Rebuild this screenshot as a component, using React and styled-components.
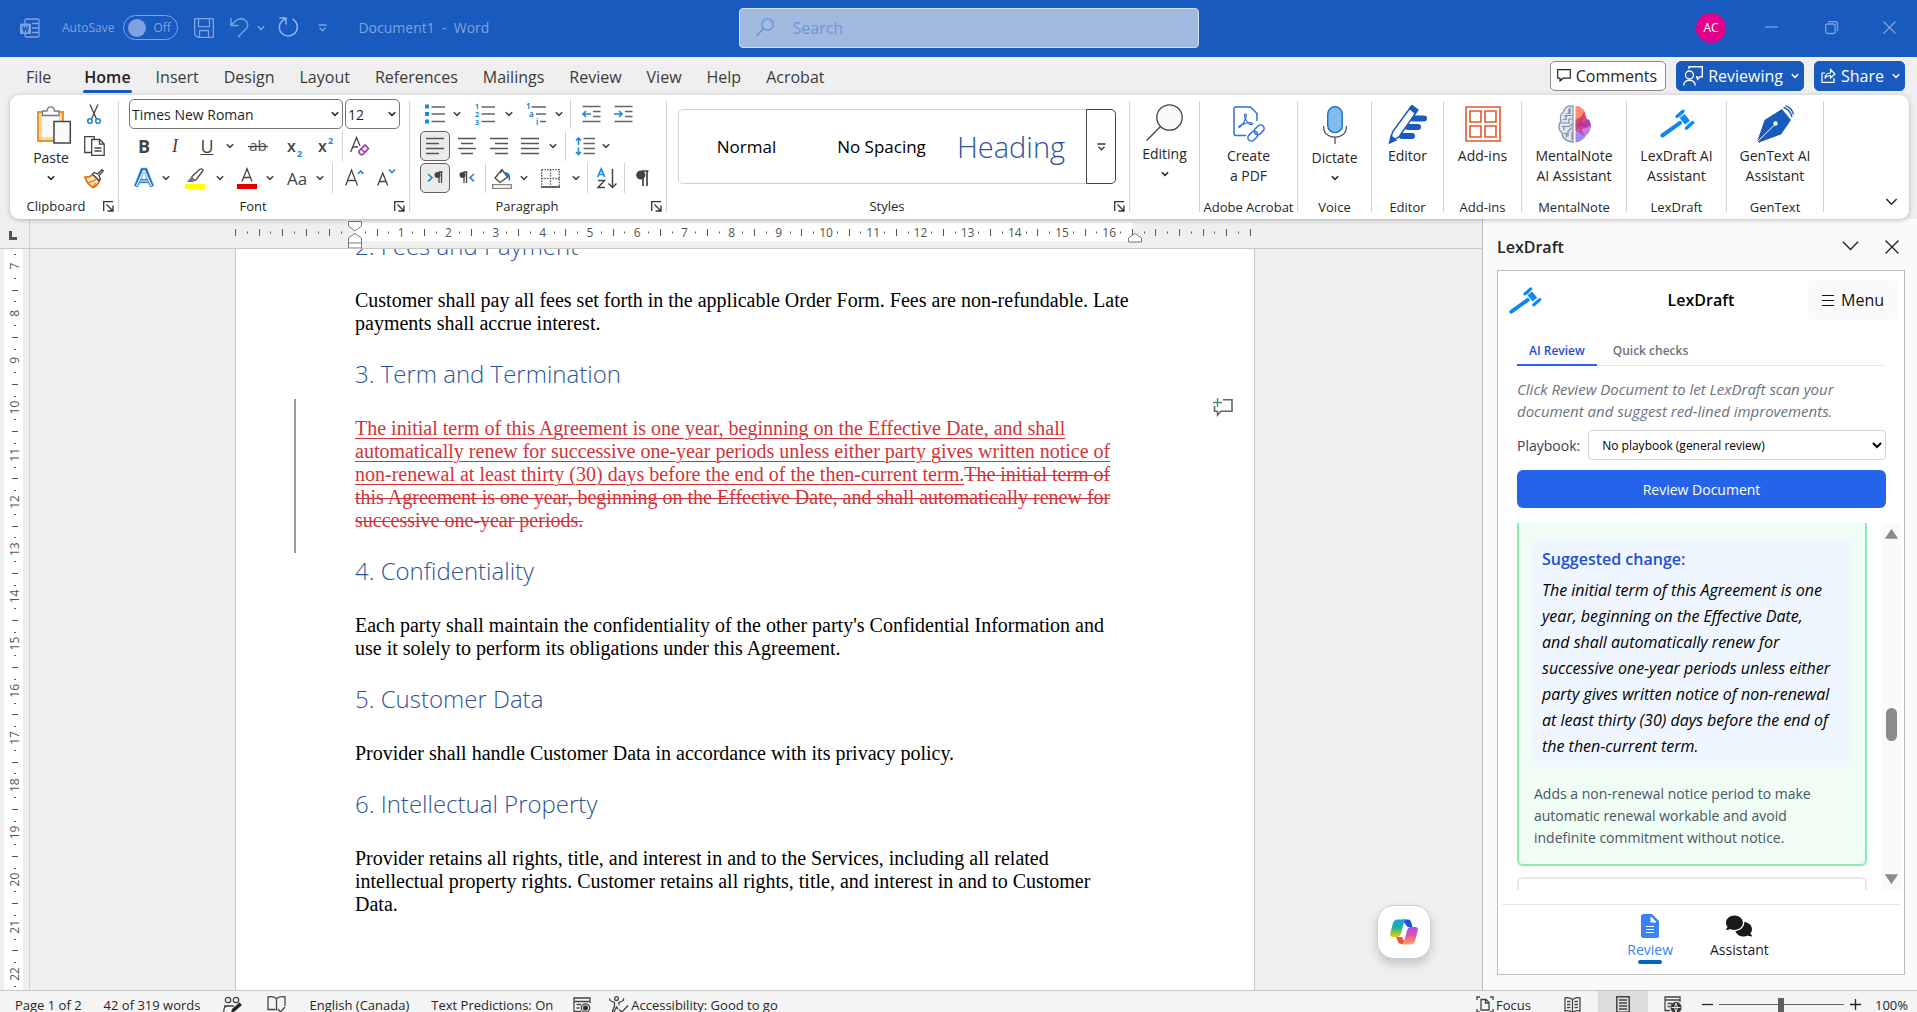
import React from "react";
import styled, { createGlobalStyle, css } from "styled-components";
import { FaComments } from "react-icons/fa6";

const GlobalStyle = createGlobalStyle`
  * {
    box-sizing: border-box;
  }
  body {
    margin: 0;
    overflow: hidden;
    font-family: "Open Sans", "Noto Sans", sans-serif;
    color: #262626;
  }
  button, input, select {
    font-family: inherit;
    color: inherit;
  }
  button {
    display: flex;
    align-items: center;
    justify-content: center;
    padding: 0;
    border: none;
    background: none;
  }
  svg {
    display: block;
    flex: none;
    overflow: visible;
  }
  h1, h2, p {
    margin: 0;
  }
`;

const Shell = styled.div`
  display: flex;
  flex-direction: column;
  height: 100vh;
  overflow: hidden;
  background: #efefef;
`;

/* ---------- title bar ---------- */

const TitleBar = styled.header`
  display: grid;
  grid-template-columns: 1fr 460px 1fr;
  align-items: center;
  flex: none;
  height: 57px;
  padding: 0 0 2px 20px;
  background: #185abd;
  color: #7ea3e0;
`;

const QuickAccess = styled.div`
  display: flex;
  align-items: center;
  gap: 10px;
`;

const AutoSave = styled.label`
  display: flex;
  align-items: center;
  gap: 9px;
  margin: 0 6px 0 12px;
  font-size: 12px;
`;

const Toggle = styled.span`
  display: flex;
  align-items: center;
  gap: 7px;
  width: 55px;
  height: 25px;
  padding-left: 4px;
  border: 1px solid #7ea3e0;
  border-radius: 13px;
  input {
    appearance: none;
    width: 18px;
    height: 18px;
    margin: 0;
    border-radius: 50%;
    background: #7ea3e0;
  }
`;

const SplitButton = styled.div`
  display: flex;
  align-items: center;
`;

const BarButton = styled.button`
  width: ${(p) => p.$w}px;
  height: 30px;
`;

const DocTitle = styled.h1`
  margin-left: 12px;
  font-size: 14px;
  font-weight: 400;
  white-space: pre;
`;

const SearchBox = styled.label`
  display: flex;
  align-items: center;
  gap: 17px;
  height: 40px;
  padding-left: 16px;
  border: 1px solid #d3dff3;
  border-radius: 4px;
  background: #a2b9e0;
  color: #6290d8;
  input {
    flex: 1;
    min-width: 0;
    border: none;
    outline: none;
    background: none;
    font-size: 16px;
  }
  input::placeholder {
    color: #6c96dc;
  }
`;

const WindowControls = styled.div`
  display: flex;
  align-items: center;
  justify-content: flex-end;
`;

const Avatar = styled.button`
  width: 30px;
  height: 30px;
  margin-right: 15px;
  border-radius: 50%;
  background: #e3008c;
  color: #fff;
  font-size: 12px;
`;

/* ---------- ribbon ---------- */

const TabRow = styled.nav`
  display: flex;
  align-items: center;
  gap: 1px;
  flex: none;
  height: 38px;
  padding: 1px 12px 0 14px;
`;

const RibbonTab = styled.button`
  position: relative;
  height: 36px;
  padding: 0 12px;
  font-size: 16px;
  color: #3b3b3b;
  ${(p) =>
    p.$active &&
    css`
      margin-left: 8px;
      font-weight: 600;
      color: #1f1f1f;
      &::after {
        content: "";
        position: absolute;
        right: 11px;
        bottom: 2px;
        left: 11px;
        height: 3px;
        border-radius: 2px;
        background: #185abd;
      }
    `}
`;

const TabActions = styled.div`
  display: flex;
  gap: 10px;
  margin: 0 0 2px auto;
`;

const ActionButton = styled.button`
  gap: 5px;
  height: 30px;
  padding: 0 ${(p) => (p.$filled ? 4 : 8)}px 0 6px;
  border: 1px solid ${(p) => (p.$filled ? "#185abd" : "#8a8a8a")};
  border-radius: 5px;
  background: ${(p) => (p.$filled ? "#185abd" : "#fff")};
  color: ${(p) => (p.$filled ? "#fff" : "#262626")};
  font-size: 16px;
`;

const ArrowPad = styled.span`
  padding-left: 3px;
`;

const Ribbon = styled.section`
  position: relative;
  z-index: 2;
  display: flex;
  flex: none;
  height: 124px;
  margin: 0 8px 0 10px;
  padding: 6px 0 0;
  border-radius: 9px;
  background: #fff;
  box-shadow: 0 1px 5px rgba(0, 0, 0, 0.25);
`;

const Group = styled.div`
  display: flex;
  flex-direction: column;
  flex: none;
  width: ${(p) => p.$w}px;
  height: 111px;
  border-right: 1px solid #d1d1d1;
`;

const GroupBody = styled.div`
  flex: 1;
  min-height: 0;
  padding-left: ${(p) => p.$pad || 0}px;
`;

const GroupFooter = styled.div`
  display: grid;
  grid-template-columns: 1fr 18px;
  align-items: center;
  justify-items: center;
  height: 18px;
  margin-bottom: -3px;
  padding: 0 4px 0 ${(p) => p.$pad || 0}px;
  font-size: 13px;
  line-height: 18px;
  white-space: nowrap;
  button {
    justify-self: end;
  }
`;

const ToolRow = styled.div`
  display: flex;
  align-items: center;
  height: 32px;
`;

const Tools = styled.div`
  margin-top: -3px;
`;

const Tool = styled.button`
  flex: none;
  width: ${(p) => p.$w || 32}px;
  height: 30px;
  margin-left: ${(p) => p.$gap || 0}px;
  font-size: 18px;
  color: #444;
  ${(p) =>
    p.$on &&
    css`
      border: 1px solid #616161;
      border-radius: 5px;
      background: #ebebeb;
    `}
`;

const ToolDivider = styled.span`
  width: 1px;
  height: 30px;
  margin: 0 ${(p) => p.$gap || 1}px;
  background: #d1d1d1;
`;

const Combo = styled.div`
  display: flex;
  align-items: center;
  width: ${(p) => p.$w}px;
  height: 30px;
  margin-right: 2px;
  padding: 0 3px 0 1px;
  border: 1px solid #767676;
  border-radius: 5px;
  input {
    flex: 1;
    min-width: 0;
    padding: 0 0 0 1px;
    border: none;
    outline: none;
    background: none;
    font-size: 14px;
    color: #1f1f1f;
  }
`;

const ClipboardTools = styled.div`
  display: flex;
`;

const BigButton = styled.button`
  flex-direction: column;
  justify-content: flex-start;
  width: 100%;
  font-size: 14px;
  line-height: 20px;
  white-space: pre-line;
`;

const PasteButton = styled(BigButton)`
  width: 40px;
  margin: 0 5px 0 21px;
`;

const PastePad = styled.span`
  padding: 5px 0 4px 6px;
`;

const ChevronPad = styled.span`
  padding-top: 7px;
`;

const IconBox = styled.span`
  display: flex;
  align-items: center;
  justify-content: center;
  height: ${(p) => p.$h || 45}px;
`;

const SerifI = styled.i`
  font-family: "Liberation Serif", serif;
`;

const CaseText = styled.span`
  font-size: 17px;
`;

const WideLabel = styled.div`
  height: 18px;
  margin-bottom: -4px;
  font-size: 13px;
  line-height: 18px;
  text-align: center;
  white-space: nowrap;
`;

const Gallery = styled.div`
  display: flex;
  height: 75px;
  width: 438px;
  margin-top: 8px;
  border: 1px solid #d1d1d1;
  border-radius: 5px;
`;

const StyleItem = styled.button`
  width: 135px;
  font-size: 17px;
  color: #000;
  white-space: nowrap;
`;

const StyleHeading = styled(StyleItem)`
  width: 124px;
  font-size: 29px;
  font-weight: 300;
  color: #2f5496;
`;

const GalleryMore = styled.button`
  width: 30px;
  margin: -1px -1px -1px auto;
  border: 1px solid #444;
  border-radius: 0 5px 5px 0;
`;

const RibbonEnd = styled.div`
  display: flex;
  flex: 1;
  align-items: flex-end;
  justify-content: flex-end;
  padding: 0 11px 12px 0;
`;

/* ---------- document ---------- */

const Workspace = styled.main`
  display: flex;
  flex: 1;
  min-height: 0;
`;

const Editor = styled.section`
  position: relative;
  display: grid;
  grid-template-columns: 30px 1fr;
  grid-template-rows: 30px 1fr;
  flex: 1;
  min-width: 0;
`;

const Corner = styled.div`
  border-right: 1px solid #d1d1d1;
  border-bottom: 1px solid #c8c8c8;
  padding: 12px 0 0 9px;
`;

const RulerTrack = styled.div`
  display: flex;
  justify-content: center;
  padding-right: 22px;
  border-bottom: 1px solid #c8c8c8;
  overflow: hidden;
`;

const SideTrack = styled.div`
  padding-left: 4px;
  border-right: 1px solid #d1d1d1;
  overflow: hidden;
`;

const Canvas = styled.div`
  display: flex;
  justify-content: center;
  padding-right: 22px;
  overflow: hidden;
`;

const Sheet = styled.article`
  position: relative;
  width: 1020px;
  padding: 0 119px;
  border: solid #c6c6c6;
  border-width: 0 1px;
  background: #fff;
  overflow: hidden;
  font-family: "Liberation Serif", "Times New Roman", serif;
  font-size: 20px;
  line-height: 23px;
  color: #000;
`;

const Story = styled.div`
  margin: -42px 1px 0 0;
`;

const Heading = styled.h2`
  margin: 23px 0 27px;
  font-family: "Open Sans", "Noto Sans", sans-serif;
  font-size: 24px;
  font-weight: 300;
  line-height: 32px;
  color: #2f5496;
`;

const Revised = styled.p`
  position: relative;
  color: #d13438;
  &::before {
    content: "";
    position: absolute;
    top: -18px;
    bottom: -21px;
    left: -61px;
    width: 2px;
    background: #9b9b9b;
  }
  ins {
    text-decoration: underline 1px;
    text-underline-offset: 3px;
  }
  del {
    text-decoration: line-through 1px;
  }
`;

const AddComment = styled.button`
  position: absolute;
  top: 149px;
  right: 21px;
`;

const CopilotButton = styled.button`
  position: absolute;
  right: 51px;
  bottom: 31px;
  width: 54px;
  height: 54px;
  border: 1px solid #d1d1d1;
  border-radius: 17px;
  background: #fff;
  box-shadow: 0 5px 10px rgba(0, 0, 0, 0.18);
`;

/* ---------- task pane ---------- */

const Pane = styled.aside`
  display: flex;
  flex-direction: column;
  flex: none;
  width: 435px;
  padding: 0 12px 15px 14px;
  border-left: 1px solid #bdbdbd;
  background: #fafafa;
`;

const PaneHeader = styled.div`
  display: flex;
  align-items: center;
  gap: 25px;
  height: 51px;
  padding: 4px 6px 0 0;
  h2 {
    flex: 1;
    font-size: 16px;
    font-weight: 600;
  }
`;

const Frame = styled.div`
  display: flex;
  flex-direction: column;
  flex: 1;
  min-height: 0;
  border: 1px solid #bdbdbd;
  background: #fff;
`;

const AppHeader = styled.div`
  display: grid;
  grid-template-columns: 85px 1fr 90px;
  align-items: center;
  padding: 9px 6px 0 11px;
  height: 49px;
  text-align: center;
  h2 {
    font-size: 16px;
    font-weight: 600;
    color: #000;
  }
`;

const MenuButton = styled.button`
  gap: 7px;
  height: 40px;
  border-radius: 6px;
  background: #fafafa;
  font-size: 16px;
  color: #111;
`;

const AppBody = styled.div`
  display: flex;
  flex-direction: column;
  flex: 1;
  min-height: 0;
  padding: 16px 3px 14px 19px;
`;

const TabList = styled.div`
  display: flex;
  gap: 4px;
  margin-right: 15px;
  border-bottom: 1px solid #e5e7eb;
`;

const PaneTab = styled.button`
  height: 30px;
  margin-bottom: -1px;
  padding: 0 12px;
  border-bottom: 2px solid ${(p) => (p.$active ? "#2563eb" : "transparent")};
  font-size: 12px;
  font-weight: 600;
  color: ${(p) => (p.$active ? "#1d4ed8" : "#6b7280")};
`;

const Hint = styled.p`
  margin: 12px 15px 8px 0;
  font-size: 15px;
  font-style: italic;
  line-height: 22px;
  color: #6b7280;
`;

const Field = styled.div`
  display: flex;
  align-items: center;
  gap: 8px;
  margin-right: 15px;
  font-size: 14px;
  color: #374151;
  select {
    flex: 1;
    min-width: 0;
    height: 30px;
    padding: 0 9px;
    border: 1px solid #d1d5db;
    border-radius: 4px;
    background: #fff;
    font-size: 12px;
    color: #000;
  }
`;

const Primary = styled.button`
  flex: none;
  height: 38px;
  margin: 10px 15px 15px 0;
  border-radius: 6px;
  background: #2563eb;
  font-size: 14px;
  color: #fff;
`;

const Results = styled.div`
  display: flex;
  justify-content: space-between;
  flex: 1;
  min-height: 0;
  overflow: hidden;
`;

const Cards = styled.div`
  width: 350px;
`;

const Card = styled.section`
  height: ${(p) => (p.$pending ? "60px" : "auto")};
  margin-bottom: 11px;
  padding: 15px;
  border: 2px solid ${(p) => (p.$pending ? "#e5e7eb" : "#86efac")};
  border-radius: 6px;
  background: ${(p) => (p.$pending ? "#fff" : "#f0fdf4")};
  &:first-child {
    border-top: none;
    border-radius: 0 0 6px 6px;
  }
`;

const Suggestion = styled.div`
  padding: 8px 17px 8px 8px;
  border-radius: 4px;
  background: #eff6ff;
  font-size: 16px;
  line-height: 26px;
  color: #000;
  strong {
    display: block;
    padding-bottom: 5px;
    font-weight: 600;
    color: #1d4ed8;
  }
`;

const Reason = styled.p`
  padding-top: 16px;
  font-size: 14px;
  line-height: 22px;
  color: #4b5563;
`;

const ScrollTrack = styled.div`
  display: flex;
  flex-direction: column;
  align-items: center;
  justify-content: space-between;
  width: 19px;
  padding: 6px 0;
  background: #fafafa;
`;

const Thumb = styled.span`
  width: 11px;
  height: 33px;
  margin-top: 36px;
  border-radius: 6px;
  background: #8b8b8b;
`;

const AppNav = styled.nav`
  display: flex;
  justify-content: center;
  gap: 37px;
  height: 70px;
  margin: 0 3px 0 4px;
  padding: 7px 7px 0 0;
  border-top: 1px solid #e5e7eb;
`;

const NavButton = styled.button`
  flex-direction: column;
  justify-content: flex-start;
  height: 54px;
  font-size: 14px;
  line-height: 20px;
  color: ${(p) => (p.$active ? "#3b82f6" : "#1a1a1a")};
  &::after {
    content: "";
    width: 24px;
    height: 4px;
    border-radius: 2px;
    background: ${(p) => (p.$active ? "#0067c0" : "transparent")};
  }
`;

/* ---------- status bar ---------- */

const StatusBar = styled.footer`
  display: flex;
  flex: none;
  height: 22px;
  padding-left: 4px;
  border-top: 1px solid #c6c6c6;
  background: #f4f4f4;
  overflow: hidden;
  font-size: 13px;
`;

const StatusItem = styled.button`
  gap: 2px;
  height: 27px;
  padding: 0 ${(p) => p.$pad || 11}px;
  background: ${(p) => (p.$on ? "#dcdcdc" : "none")};
  font-size: 13px;
  white-space: nowrap;
`;

const StatusRight = styled.div`
  display: flex;
  align-items: center;
  height: 27px;
  margin-left: auto;
  padding-right: 9px;
`;

const Zoom = styled.input`
  appearance: none;
  width: 125px;
  height: 14px;
  margin: 0 2px;
  background: linear-gradient(#666, #666) center / 100% 1px no-repeat;
  &::-webkit-slider-thumb {
    appearance: none;
    width: 6px;
    height: 14px;
    background: #5f5f5f;
  }
`;

const Percent = styled.span`
  margin-left: 10px;
`;

/* ---------- icons ---------- */

const Icon = ({ w = 20, h = w, sw = 1.3, box, color = "currentColor", children }) => (
  <svg
    width={w}
    height={h}
    viewBox={box || `0 0 ${w} ${h}`}
    fill="none"
    stroke={color}
    strokeWidth={sw}
    aria-hidden="true"
  >
    {children}
  </svg>
);

const Chevron = ({ w = 8, sw = 1.5 }) => (
  <Icon w={w} h={w * 0.75} box="0 0 8 6" sw={sw}>
    <path d="M.8 1.2 4 4.4l3.200-3.200" />
  </Icon>
);

const Launcher = () => (
  <Icon w={11} color="#333">
    <path d="M10 .7H.7V10M3.500 3.500 9.500 9.500M10 4.500V10H4.500" />
  </Icon>
);

const WordIcon = () => (
  <Icon w={20}>
    <path d="M5 6V2.500Q5 1 6.500 1H18q1 0 1 1v16q0 1-1 1H6.500Q5 19 5 17.500V16M12 5.500h7M12 10h7M12 14.500h7" />
    <rect x="0" y="5.500" width="11" height="10.500" rx="1" fill="currentColor" stroke="none" />
    <path d="m2.500 8 1.500 5.500L5.500 9 7 13.500 8.500 8" stroke="#185abd" />
  </Icon>
);

const SaveIcon = () => (
  <Icon w={20}>
    <path d="M.7.7h18.600v18.600H3.500L.7 16.500ZM4.500.7v8h11v-8M5.500 19v-6.500h9V19" />
  </Icon>
);

const UndoIcon = () => (
  <Icon w={19} h={21} sw={1.4}>
    <path d="M1 1v7.500h7.500M1.500 8C5 3 10 .5 14 2.500c5 3 4.500 7 1.500 10L8 20" />
  </Icon>
);

const RedoIcon = () => (
  <Icon w={21} sw={1.5} color="#8fb4ee">
    <path d="M1.500 1H8v6.500M7.500 1.500C3 4 .8 8 1.500 12a9 9 0 1 0 13-10" />
  </Icon>
);

const MoreIcon = ({ color }) => (
  <Icon w={9} h={8} sw={1.3} color={color}>
    <path d="M.5 1h8M1.500 3.800l3 3 3-3" />
  </Icon>
);

const SearchIcon = () => (
  <Icon w={18} h={19}>
    <circle cx="11.500" cy="6.500" r="5.700" />
    <path d="m7.500 10.500-7 7.500" />
  </Icon>
);

const PasteIcon = () => (
  <Icon w={34} h={38}>
    <path d="M1 6h25v29H1z" fill="#fff" stroke="#e8912d" strokeWidth="2" />
    <path d="M3.500 8.500h20v24h-20z" fill="#fafafa" stroke="#fbd98d" strokeWidth="3" />
    <path d="M5.500 9.500V5h4.500c.5-5.500 7-5.500 7.500 0h4.500v4.500z" fill="#fafafa" stroke="#777" />
    <path d="M17 15.500h16.300V37H17z" fill="#fafafa" stroke="#444" strokeWidth="1.500" />
  </Icon>
);

const CutIcon = () => (
  <Icon w={14} h={20} color="#444">
    <path d="M3 .5 9.500 15M11 .5 4.500 15" />
    <circle cx="3" cy="17" r="2.300" stroke="#1e8ad6" strokeWidth="1.600" />
    <circle cx="11" cy="17" r="2.300" stroke="#1e8ad6" strokeWidth="1.600" />
  </Icon>
);

const CopyIcon = () => (
  <Icon w={21} h={20} color="#444">
    <path d="M7 16.500H.7V.7h9.500V3M7.700 3.500h8l4.500 4.500v11.300H7.700zM15.500 3.500V8.200H20M10.500 12h7M10.500 15h7" />
  </Icon>
);

const BrushIcon = () => (
  <Icon w={20} h={19}>
    <path d="M1 8q5 .5 7.500-2.500l7 6.500Q13 17 9 18.500 3 15 1 8Z" fill="#fce3b5" stroke="#e0700d" strokeWidth="1.700" />
    <path d="M5 13.500q4-1 7-3M9 18l2.500-4" stroke="#e0700d" />
    <path d="m8.500 5 2-1.500 3 1.500L18 .7 19.300 2l-4.500 4.500 1.700 3.500-1.500 1.500z" fill="#fff" stroke="#444" />
  </Icon>
);

const StrikeIcon = () => (
  <Icon w={20} h={20}>
    <text x="10" y="15" textAnchor="middle" fontSize="15" fill="#555" stroke="none">ab</text>
    <path d="M0 10.500h20" stroke="#444" />
  </Icon>
);

const ScriptIcon = ({ up }) => (
  <Icon w={16} h={22}>
    <text x="0" y="17" fontSize="16" fontWeight="600" fill="#444" stroke="none">x</text>
    <text x="10" y={up ? 9 : 22} fontSize="9" fontWeight="700" fill="#1e8ad6" stroke="none">2</text>
  </Icon>
);

const EraserIcon = () => (
  <Icon w={20} h={20} color="#444">
    <path d="M.7 16 6.500 1.500 10 10M3 11h5" />
    <path d="m9 15 6-6 3.500 3.500-6 6.300H11L9 17z" fill="#f3e0f7" stroke="#9b3bab" strokeWidth="1.600" />
    <path d="m11 13 4 3.500" stroke="#9b3bab" />
  </Icon>
);

const EffectIcon = () => (
  <Icon w={20} h={20}>
    <path d="M2 18.500 8.500 2h3L18 18.500M5 13h10" stroke="#a9d1f3" strokeWidth="5" />
    <path d="M2 18.500 8.500 2h3L18 18.500M5 13h10" stroke="#1a6fc0" strokeWidth="3.500" />
    <path d="M2.500 18 9.500 2.500h1L17.500 18M6 13h8" stroke="#fff" strokeWidth="1.200" />
  </Icon>
);

const HighlightIcon = () => (
  <Icon w={20} h={21} color="#444">
    <path d="m7 8.500 7.500-7q3-1.500 3.500 1L11 12l-4.500.8z" />
    <path d="m6.500 8.500 4.500 4-3 1.500H2z" fill="#777" stroke="none" />
    <path d="M0 18.500h20" stroke="#ff0" strokeWidth="5" />
  </Icon>
);

const FontColorIcon = () => (
  <Icon w={20} h={21} color="#444">
    <path d="M5 13.500 10 .8l5 12.700M6.800 9.500h6.400" />
    <path d="M0 18.500h20" stroke="#e00000" strokeWidth="5" />
  </Icon>
);

const GrowIcon = ({ small }) => (
  <Icon w={19} h={20} color="#444">
    <path d={small ? "M.7 17.500 5.700 5l5 12.500M2.500 13.500H9" : "M.7 17.500 6.500 2l6 15.500M2.800 12.500h7.500"} />
    <path d={small ? "m12 1.500 3 3 3-3" : "m13 6 2.700-3L18.500 6"} stroke="#1e8ad6" strokeWidth="1.700" />
  </Icon>
);

const BulletsIcon = () => (
  <Icon w={20} h={20} color="#666">
    <path d="M6.500 3H20M6.500 10H20M6.500 17.500H20" />
    <path d="M0 2.500h4M0 10h4M0 17.500h4" stroke="#1e8ad6" strokeWidth="4" />
  </Icon>
);

const NumbersIcon = () => (
  <Icon w={20} h={20} color="#666">
    <path d="M6.500 3H20M6.500 10H20M6.500 17.500H20" />
    <g fill="#1e8ad6" stroke="none" fontSize="7" fontWeight="700">
      <text x="0" y="5">1</text>
      <text x="0" y="13">2</text>
      <text x="0" y="21">3</text>
    </g>
  </Icon>
);

const LevelsIcon = () => (
  <Icon w={20} h={20} color="#666">
    <path d="M5.500 3H20M10 10H20M14 17.500H20" />
    <g fill="#1e8ad6" stroke="none" fontSize="8" fontWeight="700">
      <text x="0" y="5">1</text>
      <text x="3" y="13">a</text>
      <text x="10" y="21">i</text>
    </g>
  </Icon>
);

const IndentIcon = ({ right }) => (
  <Icon w={19} h={18} color="#666">
    <path d="M.5 1.500h18M11 6.500h7.500M11 11.500h7.500M.5 16.500h18" />
    <path d={right ? "M0 9h8M5 6l3 3-3 3" : "M1 9h8M4 6 1 9l3 3"} stroke="#1e8ad6" strokeWidth="1.600" />
  </Icon>
);

const lineSets = {
  left: "M0 1.500h18M0 6.500h13M0 11.500h18M0 16.500h13",
  center: "M0 1.500h18M3 6.500h12M0 11.500h18M3 16.500h12",
  right: "M0 1.500h18M5 6.500h13M0 11.500h18M5 16.500h13",
  justify: "M0 1.500h18M0 6.500h18M0 11.500h18M0 16.500h18",
};

const AlignIcon = ({ kind }) => (
  <Icon w={18} h={18} color="#555" sw={1.4}>
    <path d={lineSets[kind]} />
  </Icon>
);

const SpacingIcon = () => (
  <Icon w={20} h={18} color="#666">
    <path d="M8.500 1.500H20M8.500 6.500H20M8.500 11.500H20M8.500 16.500H20" />
    <path d="M3.500 8V1M1 3.500 3.500 1 6 3.500M3.500 10.500v7M1 15l2.500 2.500L6 15" stroke="#1e8ad6" strokeWidth="1.600" />
  </Icon>
);

const DirectionIcon = ({ rtl }) => (
  <Icon w={16} h={14}>
    <path
      d={rtl ? "M8.500 1H4.500M7.500 1v11M5 1v11" : "M15.500 1h-4M14.500 1v11M12 1v11"}
      stroke="#444"
    />
    <circle cx={rtl ? 3.5 : 10.5} cy="4" r="3" fill="#444" stroke="none" />
    <path d={rtl ? "m15 3-4 3.700 4 3.700" : "m1 3 4 3.700-4 3.700"} stroke="#1e8ad6" strokeWidth="1.700" />
  </Icon>
);

const BucketIcon = () => (
  <Icon w={20} h={21} color="#444">
    <path d="m3 10 7-8.500 5.500 7.500-7.500 5.500zM10 1.500 8.500 5" />
    <path d="M12 4q5 0 6 4v5q-2-1-1.500-4z" fill="#1a6fc0" stroke="none" />
    <path d="M.6 16.600h18.800v3.800H.6z" stroke="#888" fill="#fff" />
  </Icon>
);

const BordersIcon = () => (
  <Icon w={19} h={19} color="#555">
    <path d="M.7.7h17.600V18M.7.700V18M9.500.7V18M.7 9.500h17.600" strokeDasharray="1.500 1.200" />
    <path d="M0 18h19" strokeWidth="1.800" />
  </Icon>
);

const SortIcon = () => (
  <Icon w={20} h={21} color="#444" sw={1.5}>
    <path d="M15.500 1v18M11.500 15.500l4 4 4-4M1 12.500h6.500L1 19.500h7" />
    <path d="M.7 9 4.200.8 7.700 9M2 6.500h4.500" stroke="#1e8ad6" strokeWidth="1.700" />
  </Icon>
);

const PilcrowIcon = () => (
  <Icon w={14} h={16} color="#444" sw={1.7}>
    <path d="M12.500 1H6M7 1v15M11 1v15" />
    <circle cx="4.800" cy="5" r="4.600" fill="#444" stroke="none" />
  </Icon>
);

const EditingIcon = () => (
  <Icon w={37} h={37} color="#444">
    <circle cx="23.500" cy="13.500" r="12.700" fill="#fafafa" />
    <path d="M14.500 22.500.7 36.500" />
  </Icon>
);

const PdfIcon = () => (
  <Icon w={32} h={36} color="#2f6fdd" sw={1.5}>
    <path d="M13 29.500H3q-2 0-2-2V3q0-2 2-2h14.500l6.500 6.500V15" />
    <path
      d="M12.500 8c-1.800 0-.8 4 .8 6.500s4.200 4.500 5.700 4 .3-2-2.500-1.800S8 18.500 6.500 20s-.3 2.200 1.500.2 4-6 4.800-8.700.7-3.500-.3-3.500z"
      strokeWidth="1.200"
    />
    <g transform="rotate(-45 23 27)">
      <rect x="13" y="23.500" width="11" height="7" rx="3.500" />
      <rect x="22" y="23.500" width="11" height="7" rx="3.500" />
    </g>
  </Icon>
);

const MicIcon = () => (
  <Icon w={24} h={38} color="#555">
    <path d="M.7 20v1.500c0 13 22.600 13 22.600 0V20M12 31.500V38" />
    <rect x="4.700" y=".7" width="14.600" height="26" rx="7.300" fill="#83bcec" stroke="#0f6cbd" />
  </Icon>
);

const EditorIcon = () => (
  <Icon w={38} h={38}>
    <path d="M24 13.500h11M19 22h10M13 31h10" stroke="#185abd" strokeWidth="6" strokeLinecap="round" />
    <path d="M1 37 3.500 27 21 3l6 4.500L10 32z" fill="#fafafa" stroke="#185abd" strokeWidth="1.500" />
    <path d="m20.500 3.500 2.500-3 6 4.500-2.500 3.500zM.5 38l1.500-7 5 4z" fill="#185abd" stroke="#185abd" />
  </Icon>
);

const AddinsIcon = () => (
  <Icon w={36} color="#e0592a" sw={1.6}>
    <path d="M1 1h34v34H1zM5 5h11v11H5zM20 5h11v11H20zM5 20h11v11H5zM20 20h11v11H20z" />
  </Icon>
);

const BrainIcon = () => (
  <Icon w={33} h={38}>
    <path
      d="M15 1C10 0 6 3 5.500 7 2 9 2 13 3 16c-3 4-3 9 1 12 0 5 5 9 11 9z"
      fill="#e4e7ef"
      stroke="#8b93b5"
    />
    <path
      d="M12 2.500v6H8.500M14 10.500H8v4H5M14 14h-3v4H3M14.500 18.500l-3 3H6v4M14 22.500l-4 4v5M14 27v8M5.500 28.500h3v4M11 4v4M6 11h3M4 21.500h4"
      stroke="#7f88ad"
      strokeWidth="1.200"
    />
    <path d="M17.500 1c5 0 9 3 10 8l-10 14z" fill="#ff8f70" stroke="none" />
    <path d="m26 6 2.500 7q1 2 1 3l-12 9z" fill="#e8476d" stroke="none" />
    <path d="m17.500 21 13-7q3 4 2 9z" fill="#a63fb8" stroke="none" />
    <path d="m17.500 21 15 0q0 7-5 9.500z" fill="#c87ae6" stroke="none" />
    <path d="M17.500 24 28.500 30q-4 7-11 7.500z" fill="#9a8cf8" stroke="none" />
    <path d="m17.500 15 8-5-2 8 8 4-8 2 3 7-9-6z" fill="#c72c79" opacity=".75" stroke="none" />
  </Icon>
);

const GavelIcon = ({ w, h }) => (
  <Icon w={w} h={h} box="0 0 102 86" color="#0f86f0">
    <path d="M7 79 60 41" strokeWidth="12" strokeLinecap="round" />
    <path d="m51 22 18-16M79 57l19-17" strokeWidth="10" strokeLinecap="round" />
    <path d="M57 24 72 12l19 24-14 12z" fill="#0f86f0" stroke="none" />
    <path d="m57 27 18-15M73 49 93 33" stroke="#fff" strokeWidth="3" />
  </Icon>
);

const NibIcon = () => (
  <Icon w={38} h={38}>
    <path d="M1 37 8.500 15 26 4l9 11-10 14.500-22 8z" fill="#185abd" stroke="none" />
    <path d="M27.500 2.500Q34 4 36 12M29.500.7Q36 3 37.500 9.500" stroke="#185abd" strokeWidth="1.400" />
    <path d="M1 37 19 19.500" stroke="#fff" strokeWidth="1" />
    <circle cx="19.500" cy="18.500" r="2.200" fill="#fff" stroke="none" />
  </Icon>
);

const CommentIcon = () => (
  <Icon w={14} h={13} sw={1.2}>
    <path d="M.7.7h12.600v8.500H6L3 12V9.200H.7z" />
  </Icon>
);

const ReviewingIcon = () => (
  <Icon w={20} h={20} sw={1.4}>
    <circle cx="6.500" cy="9" r="4" />
    <path d="M.7 19.500c0-7 11.600-7 11.600 0M6 3V.8h13.300v10H17l-2.500 2.500-.5-2.500h-1" />
  </Icon>
);

const ShareIcon = () => (
  <Icon w={15} h={15} sw={1.2}>
    <path d="M4 5H1v9.300h12V10M4 10.500c0-4 3-5.500 5.500-5.500V1.500L14 6 9.500 10V7.500C7 7.500 5 8.500 4 10.500z" />
  </Icon>
);

const CopilotIcon = () => (
  <Icon w={28} h={26}>
    <defs>
      <linearGradient id="cpA" x1="0" y1="0" x2="0" y2="1">
        <stop offset="0" stopColor="#13a4ef" />
        <stop offset=".45" stopColor="#1eb0a0" />
        <stop offset=".8" stopColor="#a3c93a" />
        <stop offset="1" stopColor="#f7c700" />
      </linearGradient>
      <linearGradient id="cpB" x1="0" y1="0" x2="0" y2="1">
        <stop offset="0" stopColor="#a44cf0" />
        <stop offset=".5" stopColor="#e9559d" />
        <stop offset="1" stopColor="#ffa45c" />
      </linearGradient>
    </defs>
    <g stroke="none">
      <path d="M12 .5h6q2.500 0 3.300 3l1.200 4.500h-5z" fill="#1d52d4" />
      <path d="M6 18h6l3.500 7H11q-2.500 0-3.200-3z" fill="#f0553a" />
      <path d="M7.500.5h9q-2 1-2.800 4l-2.500 9.500q-1.200 4-4.200 4H3q-3.500 0-2.700-4L3 4Q4.200.5 7.500.5z" fill="url(#cpA)" />
      <path d="M20.500 25.500h-9q2-1 2.800-4L16.800 12Q18 8 21 8h4q3.500 0 2.700 4L25 22q-1.200 3.500-4.500 3.500z" fill="url(#cpB)" />
    </g>
  </Icon>
);

const NewCommentIcon = () => (
  <Icon w={20} h={19} color="#666" sw={1.6}>
    <path d="M10 1.800h9v11.500H8L4.500 17v-3.700h-3V8" />
    <path d="M4.500 0v9M0 4.500h9" stroke="#2e9e5b" strokeWidth="1.400" />
  </Icon>
);

const DocIcon = () => (
  <svg width="18" height="24" viewBox="0 0 18 24" aria-hidden="true">
    <path d="M2.500 0H11l7 7v14.500q0 2.500-2.500 2.500h-13Q0 24 0 21.500v-19Q0 0 2.500 0z" fill="#3b82f6" />
    <path d="M10 3v5h5zM5 12.500h8M5 15.500h8M5 18.500h8" fill="#fff" stroke="#fff" />
  </svg>
);

const ProofIcon = () => (
  <Icon w={19} h={17} color="#444">
    <path d="M9.500 2.500v12M9.500 2.500Q6 0 1 1v12.500h7.500M9.500 2.500Q13 0 18 1v9M11 13l2.500 3 4.500-5" />
  </Icon>
);

const TrackIcon = () => (
  <Icon w={20} h={18} color="#444">
    <circle cx="5" cy="4" r="2.700" />
    <circle cx="13" cy="4" r="2.700" />
    <path d="M1 17q-1-7 4-7h4M1 10h10" />
    <path d="m8 17 1-4 7.500-6.500L19 9l-7.500 6.500z" fill="#222" stroke="none" />
  </Icon>
);

const MacroIcon = () => (
  <Icon w={18} h={16} color="#444">
    <path d="M8 14.500H1V1h16v5M1 4.500h16M3.500 7.500H8M3.500 11h3" />
    <circle cx="12.500" cy="11" r="4.200" />
    <circle cx="12.500" cy="11" r="2" fill="#222" />
  </Icon>
);

const AccessIcon = () => (
  <Icon w={20} h={17} color="#444">
    <circle cx="7.500" cy="2.500" r="1.900" />
    <path d="M1 2.500q-1 1.500 1 2.500l3.500 1.500V10l-2 5q0 1.500 1.500 1l2.500-5 1.500 2M14 2.500q1.500 1.500-.5 2.500L10 6.500V9M10 13.500l3 2.500 6-6.500" />
  </Icon>
);

const FocusIcon = () => (
  <Icon w={18} h={17} color="#444">
    <path d="M4 1H1v3M14 1h3v3M1 13v3h3M17 13v3h-3" />
    <path d="M5 3.500h5L13 6.500V14H5zM9.500 3.500V7H13" />
  </Icon>
);

const ReadIcon = () => (
  <Icon w={17} h={16} color="#444">
    <path d="M8.500 2.500v13M8.500 2.500Q5 0 1 1v13q4-1 7.500 1.500Q12 13 16 14V1q-4-1-7.500 1.500M3 4.500h3.500M3 7.500h3.500M3 10.500h3.500M10.500 4.500H14M10.500 7.500H14M10.500 10.500H14" />
  </Icon>
);

const PrintIcon = () => (
  <Icon w={14} h={17} color="#444" sw={1.5}>
    <path d="M.8.8h12.400v15.400H.8zM3 4h8M3 7h8M3 10h8M3 13h8" />
  </Icon>
);

const WebIcon = () => (
  <Icon w={18} h={17} color="#444">
    <path d="M6 14.500H1V1h15v5M1 4h15M3.500 7.500H8M3.500 10.500H6" />
    <circle cx="12" cy="11.500" r="5" fill="#333" />
    <path d="M7.500 11.500h9M12 7q-3 4.500 0 9M12 7q3 4.500 0 9" stroke="#f4f4f4" strokeWidth=".9" />
  </Icon>
);

/* ---------- rulers ---------- */

const CM = 47.2;

const HorizontalRuler = () => {
  const marks = [];
  for (let i = -10; i <= 76; i += 1) {
    const x = 118 + (i * CM) / 4;
    const numbered = i > 0 && i < 66 && i % 4 === 0;
    if (i === 0) continue;
    if (numbered) {
      marks.push(
        <text key={i} x={x + 1} y="18" textAnchor="middle" fontSize="12" fill="#555" stroke="none">
          {i / 4}
        </text>
      );
    } else if (i % 2 === 0) {
      marks.push(<path key={i} d={`M${Math.round(x) + 0.5} 10v7`} />);
    } else {
      marks.push(<path key={i} d={`M${Math.round(x) + 0.5} 12.500v2`} />);
    }
  }
  return (
    <Icon w={1020} h={29} color="#555" sw={1}>
      <path d="M118 4h780v18H118z" fill="#fff" stroke="none" />
      {marks}
      <path d="M113.500 2.500h13v4.500l-6.500 5-6.500-5zM120 14.500l6.500 4.500v10h-13V19zM113.500 24h13" fill="#fff" stroke="#777" />
      <path d="m900 14.500 6.500 4.500v4h-13v-4z" fill="#fff" stroke="#777" />
    </Icon>
  );
};

const VerticalRuler = () => {
  const marks = [];
  for (let i = -1; i <= 61; i += 1) {
    const y = 17 + (i * CM) / 4;
    const snapped = Math.round(y) + 0.5;
    if (i % 4 === 0) {
      marks.push(
        <text
          key={i}
          transform={`translate(15 ${y}) rotate(-90)`}
          textAnchor="middle"
          fontSize="12"
          fill="#555"
          stroke="none"
        >
          {7 + i / 4}
        </text>
      );
    } else {
      marks.push(<path key={i} d={i % 2 === 0 ? `M8 ${snapped}h6` : `M10 ${snapped}h2`} />);
    }
  }
  return (
    <Icon w={19} h={741} color="#555" sw={1}>
      <path d="M0 0h19v741H0z" fill="#fff" stroke="none" />
      {marks}
    </Icon>
  );
};

/* ---------- page ---------- */

const tabs = [
  "File",
  "Home",
  "Insert",
  "Design",
  "Layout",
  "References",
  "Mailings",
  "Review",
  "View",
  "Help",
  "Acrobat",
];

const addinGroups = [
  { w: 98, label: "Create\na PDF", group: "Adobe Acrobat", icon: <PdfIcon /> },
  { w: 74, label: "Dictate", group: "Voice", icon: <MicIcon />, menu: true },
  { w: 72, label: "Editor", group: "Editor", icon: <EditorIcon /> },
  { w: 78, label: "Add-ins", group: "Add-ins", icon: <AddinsIcon /> },
  { w: 105, label: "MentalNote\nAI Assistant", group: "MentalNote", icon: <BrainIcon /> },
  { w: 100, label: "LexDraft AI\nAssistant", group: "LexDraft", icon: <GavelIcon w={34} h={29} /> },
  { w: 97, label: "GenText AI\nAssistant", group: "GenText", icon: <NibIcon /> },
];

const Drop = ({ label }) => (
  <Tool $w={14} aria-label={label}>
    <Chevron />
  </Tool>
);

const Footer = ({ children, pad }) => (
  <GroupFooter $pad={pad}>
    <span>{children}</span>
    <button aria-label={`${children} settings`}>
      <Launcher />
    </button>
  </GroupFooter>
);

const TopBar = () => (
  <TitleBar>
    <QuickAccess>
      <WordIcon />
      <AutoSave>
        AutoSave
        <Toggle>
          <input type="checkbox" />
          Off
        </Toggle>
      </AutoSave>
      <BarButton $w={20} aria-label="Save"><SaveIcon /></BarButton>
      <SplitButton>
        <BarButton $w={30} aria-label="Undo"><UndoIcon /></BarButton>
        <BarButton $w={14} aria-label="Undo history"><Chevron /></BarButton>
      </SplitButton>
      <BarButton $w={20} aria-label="Redo"><RedoIcon /></BarButton>
      <BarButton $w={28} aria-label="Customize toolbar"><MoreIcon /></BarButton>
      <DocTitle>{"Document1  -  Word"}</DocTitle>
    </QuickAccess>
    <SearchBox>
      <SearchIcon />
      <input type="text" placeholder="Search" aria-label="Search" />
    </SearchBox>
    <WindowControls>
      <Avatar>AC</Avatar>
      <BarButton $w={60} aria-label="Minimize">
        <Icon w={13}><path d="M0 6h13" /></Icon>
      </BarButton>
      <BarButton $w={60} aria-label="Restore">
        <Icon w={13}><rect x=".7" y="3" width="9.500" height="9.500" rx="2" /><path d="M3 .7h7q2.500 0 2.500 2.500v7" /></Icon>
      </BarButton>
      <BarButton $w={56} aria-label="Close">
        <Icon w={13}><path d="m.5.5 12 12M12.500.5l-12 12" /></Icon>
      </BarButton>
    </WindowControls>
  </TitleBar>
);

const RibbonBar = () => (
  <Ribbon>
    <Group $w={109}>
      <GroupBody>
        <ClipboardTools>
          <PasteButton>
            <PastePad><PasteIcon /></PastePad>
            Paste
            <ChevronPad><Chevron /></ChevronPad>
          </PasteButton>
          <Tools>
            <ToolRow><Tool $w={36} aria-label="Cut"><CutIcon /></Tool></ToolRow>
            <ToolRow><Tool $w={36} aria-label="Copy"><CopyIcon /></Tool></ToolRow>
            <ToolRow><Tool $w={36} aria-label="Format painter"><BrushIcon /></Tool></ToolRow>
          </Tools>
        </ClipboardTools>
      </GroupBody>
      <Footer pad={6}>Clipboard</Footer>
    </Group>

    <Group $w={291}>
      <GroupBody $pad={10}>
        <Tools>
          <ToolRow>
            <Combo $w={214}>
              <input type="text" aria-label="Font name" defaultValue="Times New Roman" />
              <Chevron />
            </Combo>
            <Combo $w={55}>
              <input type="text" aria-label="Font size" defaultValue="12" />
              <Chevron />
            </Combo>
          </ToolRow>
          <ToolRow>
            <Tool $w={30}><b>B</b></Tool>
            <Tool><SerifI>I</SerifI></Tool>
            <Tool><u>U</u></Tool>
            <Drop label="Underline style" />
            <Tool $w={42} aria-label="Strikethrough"><StrikeIcon /></Tool>
            <Tool aria-label="Subscript"><ScriptIcon /></Tool>
            <Tool $w={30} aria-label="Superscript"><ScriptIcon up /></Tool>
            <ToolDivider />
            <Tool aria-label="Clear formatting"><EraserIcon /></Tool>
          </ToolRow>
          <ToolRow>
            <Tool $w={30} aria-label="Text effects"><EffectIcon /></Tool>
            <Drop label="Text effects menu" />
            <Tool $w={36} $gap={4} aria-label="Highlight"><HighlightIcon /></Tool>
            <Drop label="Highlight colour" />
            <Tool $w={32} $gap={4} aria-label="Font colour"><FontColorIcon /></Tool>
            <Drop label="Font colour menu" />
            <Tool $w={32} $gap={4}><CaseText>Aa</CaseText></Tool>
            <Drop label="Case menu" />
            <ToolDivider $gap={5} />
            <Tool aria-label="Grow font"><GrowIcon /></Tool>
            <Tool aria-label="Shrink font"><GrowIcon small /></Tool>
          </ToolRow>
        </Tools>
      </GroupBody>
      <Footer>Font</Footer>
    </Group>

    <Group $w={257}>
      <GroupBody $pad={10}>
        <Tools>
          <ToolRow>
            <Tool $w={30} aria-label="Bullets"><BulletsIcon /></Tool>
            <Drop label="Bullet styles" />
            <Tool $w={34} $gap={4} aria-label="Numbering"><NumbersIcon /></Tool>
            <Drop label="Number styles" />
            <Tool $w={32} $gap={4} aria-label="Multilevel list"><LevelsIcon /></Tool>
            <Drop label="List styles" />
            <ToolDivider $gap={4} />
            <Tool aria-label="Decrease indent"><IndentIcon /></Tool>
            <Tool aria-label="Increase indent"><IndentIcon right /></Tool>
          </ToolRow>
          <ToolRow>
            <Tool $w={30} $on aria-label="Align left"><AlignIcon kind="left" /></Tool>
            <Tool $w={34} aria-label="Center"><AlignIcon kind="center" /></Tool>
            <Tool $w={30} aria-label="Align right"><AlignIcon kind="right" /></Tool>
            <Tool $w={32} aria-label="Justify"><AlignIcon kind="justify" /></Tool>
            <Drop label="Justify menu" />
            <ToolDivider $gap={5} />
            <Tool $w={28} aria-label="Line spacing"><SpacingIcon /></Tool>
            <Drop label="Line spacing menu" />
          </ToolRow>
          <ToolRow>
            <Tool $w={30} $on aria-label="Left to right"><DirectionIcon /></Tool>
            <Tool $w={34} aria-label="Right to left"><DirectionIcon rtl /></Tool>
            <ToolDivider />
            <Tool $w={30} aria-label="Shading"><BucketIcon /></Tool>
            <Drop label="Shading colour" />
            <Tool $w={38} aria-label="Borders"><BordersIcon /></Tool>
            <Drop label="Border styles" />
            <ToolDivider $gap={4} />
            <Tool $w={30} aria-label="Sort"><SortIcon /></Tool>
            <ToolDivider $gap={2} />
            <Tool aria-label="Show marks"><PilcrowIcon /></Tool>
          </ToolRow>
        </Tools>
      </GroupBody>
      <Footer>Paragraph</Footer>
    </Group>

    <Group $w={463}>
      <GroupBody $pad={11}>
        <Gallery>
          <StyleItem>Normal</StyleItem>
          <StyleItem>No Spacing</StyleItem>
          <StyleHeading>Heading</StyleHeading>
          <GalleryMore aria-label="More styles"><MoreIcon color="#333" /></GalleryMore>
        </Gallery>
      </GroupBody>
      <Footer>Styles</Footer>
    </Group>

    <Group $w={70}>
      <BigButton>
        <IconBox $h={43}><EditingIcon /></IconBox>
        Editing
        <ChevronPad><Chevron /></ChevronPad>
      </BigButton>
    </Group>

    {addinGroups.map((item) => (
      <Group $w={item.w} key={item.group}>
        <GroupBody>
          <BigButton>
            <IconBox $h={item.menu && 47}>{item.icon}</IconBox>
            {item.label}
            {item.menu && <ChevronPad><Chevron /></ChevronPad>}
          </BigButton>
        </GroupBody>
        <WideLabel>{item.group}</WideLabel>
      </Group>
    ))}

    <RibbonEnd>
      <button aria-label="Collapse ribbon"><Chevron w={13} sw={0.9} /></button>
    </RibbonEnd>
  </Ribbon>
);

const Document = () => (
  <Editor>
    <Corner>
      <Icon w={8} h={9} color="#555" sw={3}><path d="M1.500 0v7.500H8" /></Icon>
    </Corner>
    <RulerTrack><HorizontalRuler /></RulerTrack>
    <SideTrack><VerticalRuler /></SideTrack>
    <Canvas>
      <Sheet>
        <Story>
          <Heading>2. Fees and Payment</Heading>
          <p>
            Customer shall pay all fees set forth in the applicable Order Form. Fees are
            non-refundable. Late payments shall accrue interest.
          </p>
          <Heading>3. Term and Termination</Heading>
          <Revised>
            <ins>
              The initial term of this Agreement is one year, beginning on the Effective Date, and
              shall automatically renew for successive one-year periods unless either party gives
              written notice of non-renewal at least thirty (30) days before the end of the
              then-current term.
            </ins>
            <del>
              The initial term of this Agreement is one year, beginning on the Effective Date, and
              shall automatically renew for successive one-year periods.
            </del>
          </Revised>
          <Heading>4. Confidentiality</Heading>
          <p>
            Each party shall maintain the confidentiality of the other party's Confidential
            Information and use it solely to perform its obligations under this Agreement.
          </p>
          <Heading>5. Customer Data</Heading>
          <p>Provider shall handle Customer Data in accordance with its privacy policy.</p>
          <Heading>6. Intellectual Property</Heading>
          <p>
            Provider retains all rights, title, and interest in and to the Services, including all
            related intellectual property rights. Customer retains all rights, title, and interest
            in and to Customer Data.
          </p>
        </Story>
        <AddComment aria-label="New comment"><NewCommentIcon /></AddComment>
      </Sheet>
    </Canvas>
    <CopilotButton aria-label="Copilot"><CopilotIcon /></CopilotButton>
  </Editor>
);

const TaskPane = () => (
  <Pane>
    <PaneHeader>
      <h2>LexDraft</h2>
      <button aria-label="Pane options"><Chevron w={19} sw={0.6} /></button>
      <button aria-label="Close pane">
        <Icon w={14} sw={1.4}><path d="m.5.5 13 13M13.500.5l-13 13" /></Icon>
      </button>
    </PaneHeader>
    <Frame>
      <AppHeader>
        <GavelIcon w={32} h={27} />
        <h2>LexDraft</h2>
        <MenuButton>
          <Icon w={12} h={11} sw={1}><path d="M0 .5h12M0 5.500h12M0 10.500h12" /></Icon>
          Menu
        </MenuButton>
      </AppHeader>
      <AppBody>
        <TabList>
          <PaneTab $active>AI Review</PaneTab>
          <PaneTab>Quick checks</PaneTab>
        </TabList>
        <Hint>
          Click Review Document to let LexDraft scan your document and suggest red-lined
          improvements.
        </Hint>
        <Field>
          <label htmlFor="playbook">Playbook:</label>
          <select id="playbook">
            <option>No playbook (general review)</option>
          </select>
        </Field>
        <Primary>Review Document</Primary>
        <Results>
          <Cards>
            <Card>
              <Suggestion>
                <strong>Suggested change:</strong>
                <em>
                  The initial term of this Agreement is one year, beginning on the Effective Date,
                  and shall automatically renew for successive one-year periods unless either party
                  gives written notice of non-renewal at least thirty (30) days before the end of
                  the then-current term.
                </em>
              </Suggestion>
              <Reason>
                Adds a non-renewal notice period to make automatic renewal workable and avoid
                indefinite commitment without notice.
              </Reason>
            </Card>
            <Card $pending />
          </Cards>
          <ScrollTrack>
            <Icon w={13} h={10}><path d="M6.500 1 12 9H1z" fill="#8b8b8b" stroke="#8b8b8b" /></Icon>
            <Thumb />
            <Icon w={13} h={10}><path d="M6.500 9 12 1H1z" fill="#8b8b8b" stroke="#8b8b8b" /></Icon>
          </ScrollTrack>
        </Results>
      </AppBody>
      <AppNav>
        <NavButton $active>
          <IconBox $h={28}><DocIcon /></IconBox>
          Review
        </NavButton>
        <NavButton>
          <IconBox $h={28}><FaComments size={26} /></IconBox>
          Assistant
        </NavButton>
      </AppNav>
    </Frame>
  </Pane>
);

const Status = () => (
  <StatusBar>
    <StatusItem>Page 1 of 2</StatusItem>
    <StatusItem>42 of 319 words</StatusItem>
    <StatusItem $pad={12} aria-label="Track changes"><TrackIcon /></StatusItem>
    <StatusItem $pad={12} aria-label="Proofing"><ProofIcon /></StatusItem>
    <StatusItem>English (Canada)</StatusItem>
    <StatusItem>Text Predictions: On</StatusItem>
    <StatusItem $pad={9} aria-label="Macros"><MacroIcon /></StatusItem>
    <StatusItem $pad={9}><AccessIcon />Accessibility: Good to go</StatusItem>
    <StatusRight>
      <StatusItem $pad={16}><FocusIcon />Focus</StatusItem>
      <StatusItem $pad={17} aria-label="Read mode"><ReadIcon /></StatusItem>
      <StatusItem $pad={18} $on aria-label="Print layout"><PrintIcon /></StatusItem>
      <StatusItem $pad={16} aria-label="Web layout"><WebIcon /></StatusItem>
      <StatusItem $pad={4} aria-label="Zoom out">
        <Icon w={11}><path d="M0 5.500h11" /></Icon>
      </StatusItem>
      <Zoom type="range" aria-label="Zoom" min="0" max="100" defaultValue="50" />
      <StatusItem $pad={4} aria-label="Zoom in">
        <Icon w={11}><path d="M0 5.500h11M5.500 0v11" /></Icon>
      </StatusItem>
      <Percent>100%</Percent>
    </StatusRight>
  </StatusBar>
);

const App = () => (
  <Shell>
    <GlobalStyle />
    <TopBar />
    <TabRow>
      {tabs.map((tab) => (
        <RibbonTab key={tab} $active={tab === "Home"}>
          {tab}
        </RibbonTab>
      ))}
      <TabActions>
        <ActionButton><CommentIcon />Comments</ActionButton>
        <ActionButton $filled><ReviewingIcon />Reviewing <ArrowPad><Chevron /></ArrowPad></ActionButton>
        <ActionButton $filled><ShareIcon />Share <ArrowPad><Chevron /></ArrowPad></ActionButton>
      </TabActions>
    </TabRow>
    <RibbonBar />
    <Workspace>
      <Document />
      <TaskPane />
    </Workspace>
    <Status />
  </Shell>
);

export default App;
